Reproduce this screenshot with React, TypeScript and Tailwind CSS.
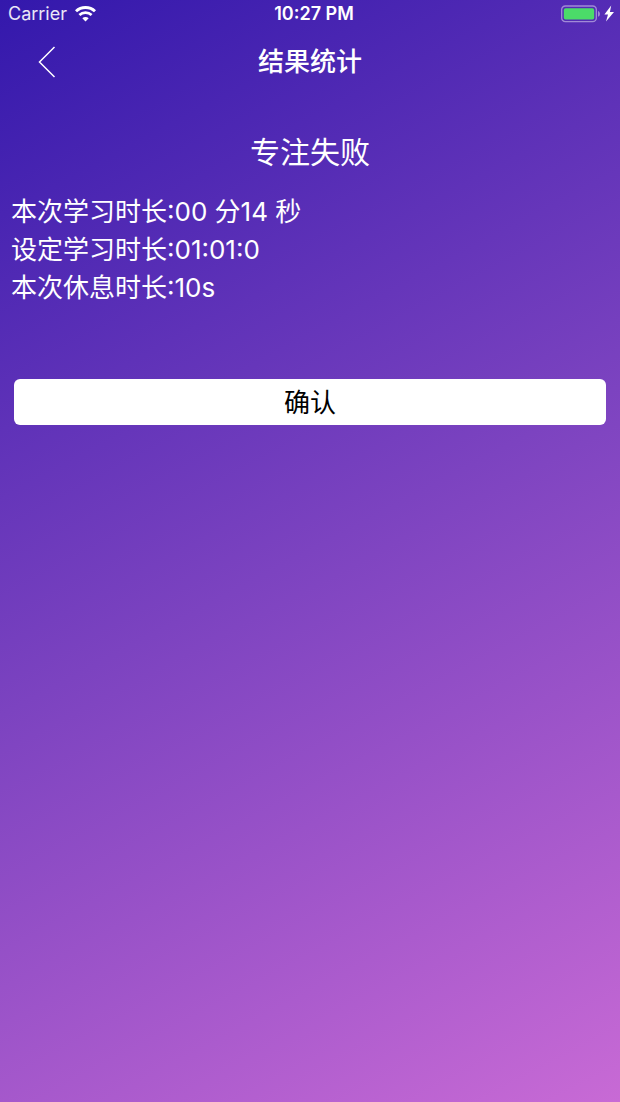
function WifiIcon() {
  return (
    <svg width="22" height="16" viewBox="0 0 22 16" fill="none" stroke="white" aria-hidden="true">
      <path d="M1 5.3C6.2 0.3 14.8 0.3 20 5.3" strokeWidth="2.9" />
      <path d="M4.4 9.1C7.8 5.9 13.2 5.9 16.6 9.1" strokeWidth="2.7" />
      <path d="M10.5 15.4L7.3 12.2C9.1 10.5 11.9 10.5 13.7 12.2Z" fill="white" stroke="none" />
    </svg>
  );
}

function BatteryIcon() {
  return (
    <svg width="53" height="18" viewBox="0 0 53 18" fill="none" aria-hidden="true">
      <rect x="0.7" y="1" width="34.6" height="15.6" rx="3.6" stroke="white" strokeOpacity="0.45" strokeWidth="1.3" />
      <rect x="2.8" y="3.2" width="30.4" height="11.4" rx="1.8" fill="#4bdb69" />
      <path d="M37 6C39.6 6.9 39.6 10.9 37 11.8Z" fill="white" fillOpacity="0.45" />
      <path d="M50.2 0.6L43.4 9.6H47L45 16.4L53 7H48.9Z" fill="white" />
    </svg>
  );
}

const results = ["本次学习时长:00 分14 秒", "设定学习时长:01:01:0", "本次休息时长:10s"];

export default function App() {
  return (
    <div className="min-h-screen bg-[linear-gradient(152deg,#3318ac_0%,#7c43c0_50%,#c86ad5_100%)] font-['Inter','Noto_Sans_CJK_SC',sans-serif] text-white">
      <div className="grid h-7 grid-cols-[1fr_auto_1fr] items-center pl-2 text-lg leading-7">
        <div className="flex items-center gap-2 text-white/90">
          <span>Carrier</span>
          <WifiIcon />
        </div>
        <span className="font-semibold">10:27 PM</span>
        <div className="flex justify-end pr-1.5">
          <BatteryIcon />
        </div>
      </div>

      <header className="grid h-17 grid-cols-[1fr_auto_1fr] items-center">
        <button type="button" aria-label="返回" className="ml-9 flex h-10 w-6 items-center">
          <svg width="20" height="32" viewBox="0 0 20 32" fill="none" stroke="white" strokeWidth="1.5" aria-hidden="true">
            <path d="M18.5 1L3.5 16L18.5 31" />
          </svg>
        </button>
        <h1 className="text-[26px] leading-10 font-medium">结果统计</h1>
      </header>

      <main>
        <h2 className="mt-8 text-center text-[30px] leading-12">专注失败</h2>
        <div className="mt-[17px] px-[11px] text-[26px] leading-[38px]">
          {results.map((line) => (
            <p key={line}>{line}</p>
          ))}
        </div>
        <div className="mt-18 px-3.5">
          <button type="button" className="h-[46px] w-full rounded-md bg-white pt-0.5 text-[26px] leading-11 text-black">
            确认
          </button>
        </div>
      </main>
    </div>
  );
}
